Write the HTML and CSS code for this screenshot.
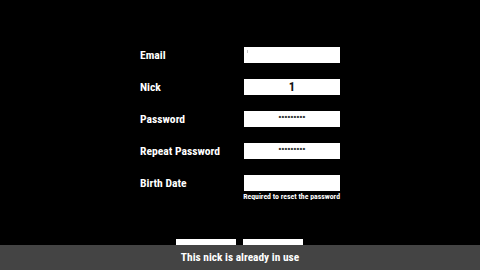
FILE: index.html
```html
<!DOCTYPE html>
<html>
<head>
<meta charset="utf-8">
<link rel="stylesheet" href="styles.css">
</head>
<body>
<div class="screen">
  <div class="form">
    <div class="label">Email</div>
    <div class="field"><div class="input"><span class="caret"></span></div></div>
    <div class="label">Nick</div>
    <div class="field"><div class="input value">1</div></div>
    <div class="label">Password</div>
    <div class="field"><div class="input dots">•••••••••</div></div>
    <div class="label">Repeat Password</div>
    <div class="field"><div class="input dots">•••••••••</div></div>
    <div class="label">Birth Date</div>
    <div class="field">
      <div class="input"></div>
      <div class="hint">Required to reset the password</div>
    </div>
  </div>
  <div class="buttons">
    <div class="btn"></div>
    <div class="btn"></div>
  </div>
  <div class="toast">This nick is already in use</div>
</div>
</body>
</html>
```
FILE: styles.css
```css
html, body {
  margin: 0;
  padding: 0;
  background: #000;
  width: 480px;
  height: 270px;
  overflow: hidden;
}
.screen {
  position: relative;
  width: 480px;
  height: 270px;
  font-family: "Roboto Condensed", "Roboto", sans-serif;
  font-stretch: condensed;
  font-weight: bold;
  color: #fff;
}
.form {
  display: grid;
  grid-template-columns: 104px 96px;
  row-gap: 16px;
  padding: 47px 0 0 140px;
}
.label {
  font-size: 11.6px;
  line-height: 16px;
  height: 16px;
  white-space: nowrap;
}
.field {
  display: flex;
  flex-direction: column;
  align-items: flex-end;
}
.input {
  width: 96px;
  height: 16px;
  background: #fff;
  color: #111;
  display: flex;
  align-items: center;
  justify-content: center;
  box-sizing: border-box;
  position: relative;
}
.caret {
  position: absolute;
  left: 3px;
  top: 3px;
  width: 1px;
  height: 3px;
  background: #c8c8c8;
}
.value {
  font-size: 12.5px;
  line-height: 16px;
}
.dots {
  font-family: "Liberation Sans", sans-serif;
  font-size: 8px;
  letter-spacing: 0.2px;
  line-height: 16px;
  color: #333;
  padding-bottom: 5px;
}
.hint {
  font-size: 7.8px;
  line-height: 9px;
  margin-top: 1px;
  white-space: nowrap;
}
.buttons {
  display: flex;
  gap: 7px;
  padding-left: 176px;
  margin-top: 38px;
}
.btn {
  width: 60px;
  height: 18px;
  background: #fff;
}
.toast {
  position: absolute;
  left: 0;
  right: 0;
  bottom: 0;
  height: 25px;
  background: #444;
  text-align: center;
  font-size: 11.4px;
  line-height: 25px;
  color: #fff;
}
```
